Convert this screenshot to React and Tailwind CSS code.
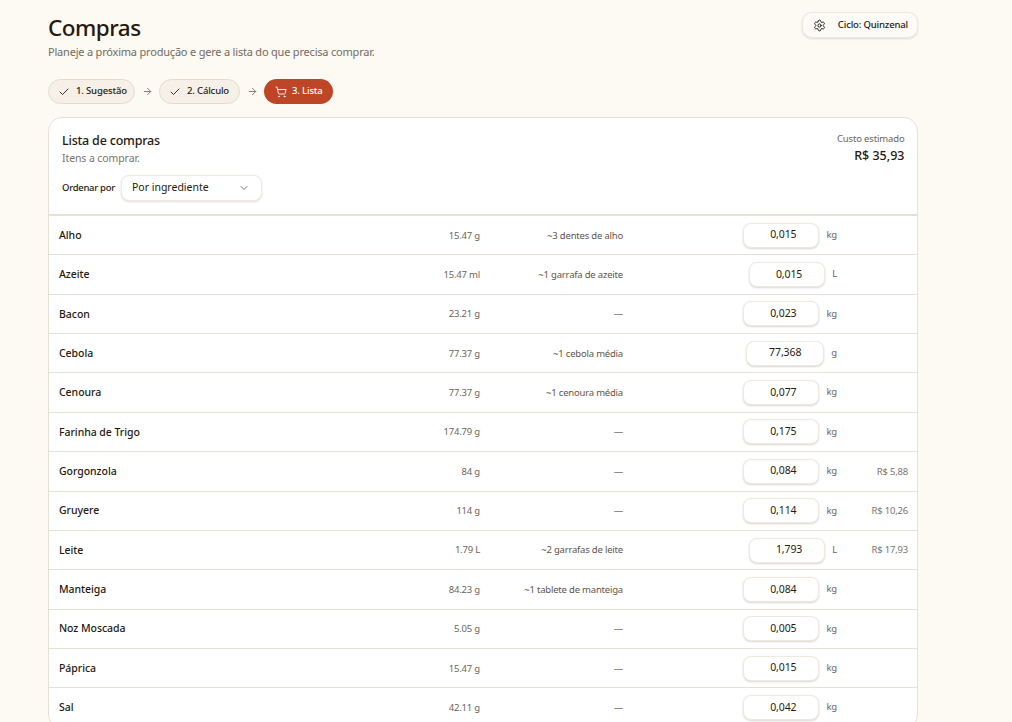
import React from "react";
import { Check, ArrowRight, ShoppingCart, ChevronDown, Settings } from "lucide-react";

const rows = [
  ["Alho", "15.47 g", "~3 dentes de alho", "0,015", "kg", ""],
  ["Azeite", "15.47 ml", "~1 garrafa de azeite", "0,015", "L", ""],
  ["Bacon", "23.21 g", "—", "0,023", "kg", ""],
  ["Cebola", "77.37 g", "~1 cebola média", "77,368", "g", ""],
  ["Cenoura", "77.37 g", "~1 cenoura média", "0,077", "kg", ""],
  ["Farinha de Trigo", "174.79 g", "—", "0,175", "kg", ""],
  ["Gorgonzola", "84 g", "—", "0,084", "kg", "R$ 5,88"],
  ["Gruyere", "114 g", "—", "0,114", "kg", "R$ 10,26"],
  ["Leite", "1.79 L", "~2 garrafas de leite", "1,793", "L", "R$ 17,93"],
  ["Manteiga", "84.23 g", "~1 tablete de manteiga", "0,084", "kg", ""],
  ["Noz Moscada", "5.05 g", "—", "0,005", "kg", ""],
  ["Páprica", "15.47 g", "—", "0,015", "kg", ""],
  ["Sal", "42.11 g", "—", "0,042", "kg", ""],
];

function Step({ label, width }) {
  return (
    <div className={`flex h-[25px] items-center gap-[6px] rounded-full border border-[#e3dbcf] bg-[#f6f0e8] pl-[9px] text-[9.5px] font-medium tracking-[-0.15px] text-[#26190f] ${width}`}>
      <Check size={12} strokeWidth={2} className="text-[#3a3029]" />
      <span>{label}</span>
    </div>
  );
}

export default function App() {
  return (
    <div className="h-[722px] overflow-hidden bg-[#fdf9f3] pl-12 pt-3 text-[#26190f] [font-family:'Noto_Sans',sans-serif]">
      <div className="w-[870px]">
        <div className="flex items-start justify-between">
          <div>
            <h1 className="mb-[1px] text-[22.5px] leading-[31px] font-medium tracking-[-0.5px]">Compras</h1>
            <p className="text-[11px] leading-[16px] tracking-[-0.2px] text-[#756b62]">
              Planeje a próxima produção e gere a lista do que precisa comprar.
            </p>
          </div>
          <div className="flex h-[26px] w-[116px] items-center justify-between rounded-[10px] border border-[#efe9df] bg-[#fdfbf7] pl-[10px] pr-[9px] text-[9.5px] font-medium tracking-[-0.15px] shadow-[0_1px_2px_rgba(70,50,30,0.15)]">
            <Settings size={13} strokeWidth={1.8} />
            <span>Ciclo: Quinzenal</span>
          </div>
        </div>

        <div className="mt-[19px] flex items-center">
          <Step label="1. Sugestão" width="w-[87px]" />
          <ArrowRight size={11} className="mx-[6.5px] text-[#7d746b]" />
          <Step label="2. Cálculo" width="w-[81px]" />
          <ArrowRight size={11} className="mx-[6.5px] text-[#7d746b]" />
          <div className="flex h-[25px] w-[69px] items-center gap-[5px] rounded-full bg-[#bd4627] pl-[11px] text-[9.5px] font-medium tracking-[-0.15px] text-white">
            <ShoppingCart size={12} strokeWidth={1.8} />
            <span>3. Lista</span>
          </div>
        </div>

        <div className="mt-[13px] rounded-[14px] border border-[#e6e0d6] bg-white">
          <div className="flex justify-between border-b-2 border-[#e6e0d6] pl-[13px] pr-[12.5px] pt-[13.5px] pb-[13.5px]">
            <div>
              <h2 className="text-[12.5px] leading-[18px] font-medium tracking-[-0.2px]">Lista de compras</h2>
              <p className="text-[10.5px] leading-[16px] tracking-[-0.1px] text-[#7d746b]">Itens a comprar.</p>
              <div className="mt-[9px] flex items-center gap-[6px]">
                <span className="pt-[1px] text-[9.5px] font-medium tracking-[-0.3px]">Ordenar por</span>
                <div className="flex h-[26px] w-[141px] items-center justify-between rounded-[8px] border border-[#efe9df] bg-white pl-[10px] pr-[11px] text-[10.5px] shadow-[0_1px_2px_rgba(70,50,30,0.15)]">
                  <span className="pt-[1px]">Por ingrediente</span>
                  <ChevronDown size={12} className="text-[#7d746b]" />
                </div>
              </div>
            </div>
            <div className="text-right">
              <p className="text-[9.5px] leading-[14px] tracking-[-0.15px] text-[#6d635a]">Custo estimado</p>
              <p className="mt-[1px] text-[12.5px] leading-[18px] font-medium">R$ 35,93</p>
            </div>
          </div>
          {rows.map(([name, qty, approx, val, unit, price]) => (
            <div key={name} className="flex h-[39.37px] items-center border-b border-[#e6e0d6] text-[9.5px] tracking-[-0.2px]">
              <div className="w-[361px] pl-[10px] pt-[1px] text-[10.5px] font-medium tracking-[-0.05px]">{name}</div>
              <div className="w-[70px] pt-[1px] text-right text-[#6d635a]">{qty}</div>
              <div className={approx === "—" ? "w-[143px] pt-[1px] text-right text-[#3a3029]" : "w-[143px] pt-[1px] text-right text-[#5f554c]"}>{approx}</div>
              <div className="flex w-[214px] items-center justify-end gap-[7px]">
                <div className="flex h-[25px] min-w-[76px] items-center justify-end rounded-[8px] border border-[#efe9df] bg-white pl-[22px] pr-[22px] text-[10.5px] tracking-[-0.1px] text-[#26190f] shadow-[0_1px_2px_rgba(70,50,30,0.2)]">
                  {val}
                </div>
                <span className="text-[#6d635a]">{unit}</span>
              </div>
              <div className="w-[71px] pt-[1px] text-right text-[#7d746b]">{price}</div>
            </div>
          ))}
        </div>
      </div>
    </div>
  );
}
